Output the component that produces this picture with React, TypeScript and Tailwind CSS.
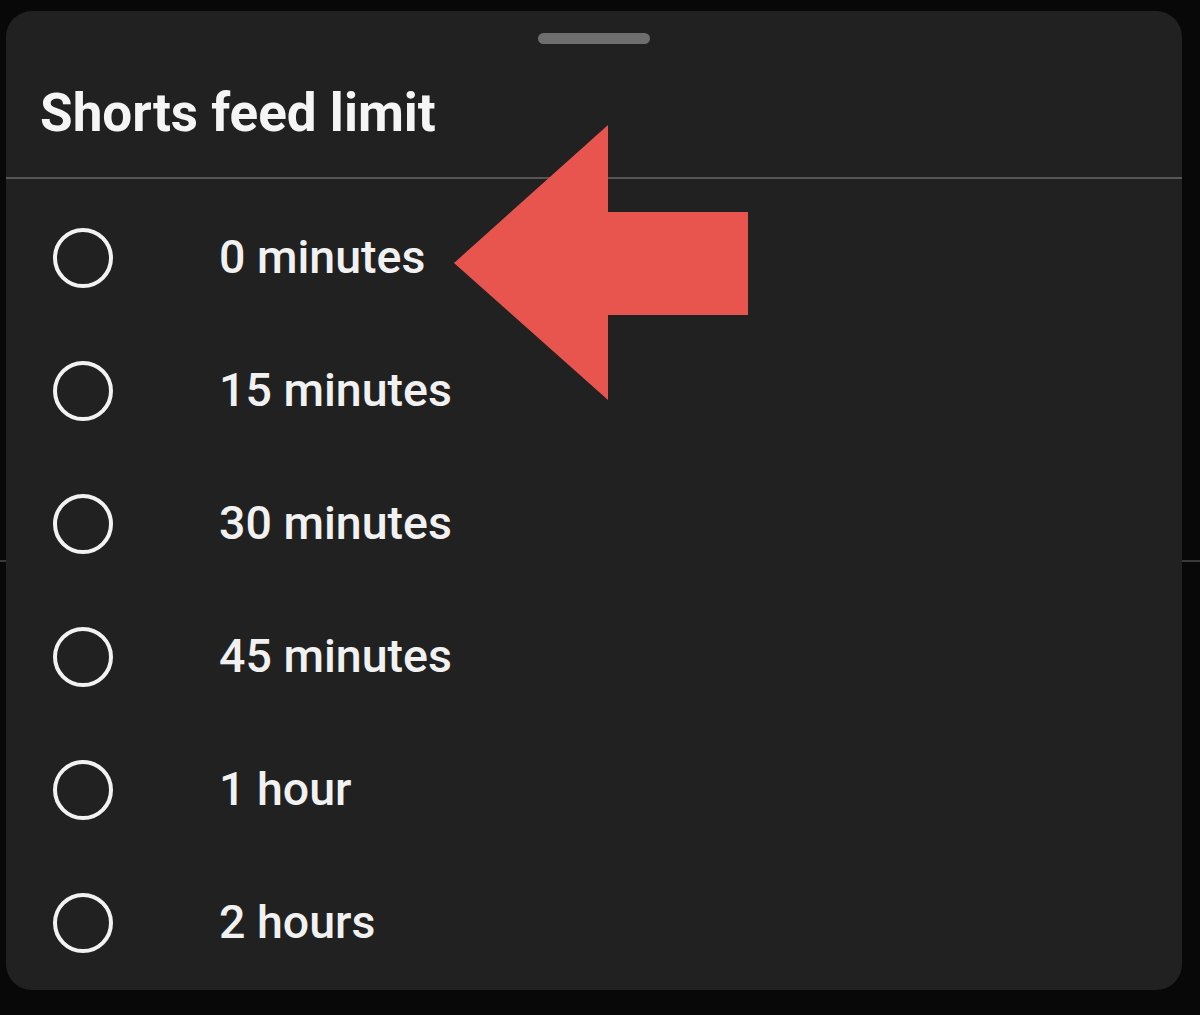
import React from "react";

const options = ["0 minutes", "15 minutes", "30 minutes", "45 minutes", "1 hour", "2 hours"];

function Radio() {
  return <span className="block w-[60px] h-[60px] rounded-full border-[4px] border-[#f2f2f2] shrink-0" />;
}

export default function App() {
  return (
    <div className="relative w-[1200px] h-[1015px] bg-[#080808] overflow-hidden pt-[11px] pl-[6px]">
      {/* content behind the sheet */}
      <div className="absolute left-0 right-0 top-[560px] h-[2px] bg-[#3a3a3a]" />

      <div className="relative w-[1176px] h-[979px] rounded-[26px] bg-[#212121] flex flex-col">
        {/* drag handle */}
        <div className="flex justify-center pt-[22px] shrink-0">
          <div className="w-[112px] h-[11px] rounded-full bg-[#6e6e6e]" />
        </div>

        <h2
          className="pl-[34px] mt-[35px] mb-[30px] h-[68px] shrink-0 text-[53px] leading-[68px] font-bold text-[#f5f5f5]"
          style={{ fontFamily: "Roboto, 'Noto Sans', sans-serif" }}
        >
          Shorts feed limit
        </h2>

        <div className="h-[2px] shrink-0 bg-[#565656]" />

        <ul className="flex flex-col pt-[12px]" style={{ fontFamily: "Roboto, 'Liberation Sans', sans-serif" }}>
          {options.map((o) => (
            <li key={o} className="flex items-center h-[133px] shrink-0 pl-[47px]">
              <Radio />
              <span className="ml-[106px] text-[46.5px] font-medium text-[#f1f1f1]">{o}</span>
            </li>
          ))}
        </ul>
      </div>

      {/* annotation arrow */}
      <svg className="absolute left-0 top-0 pointer-events-none" width="1200" height="1015" viewBox="0 0 1200 1015">
        <polygon points="454,263 608,125 608,212 748,212 748,315 608,315 608,400" fill="#E8554F" />
      </svg>
    </div>
  );
}
